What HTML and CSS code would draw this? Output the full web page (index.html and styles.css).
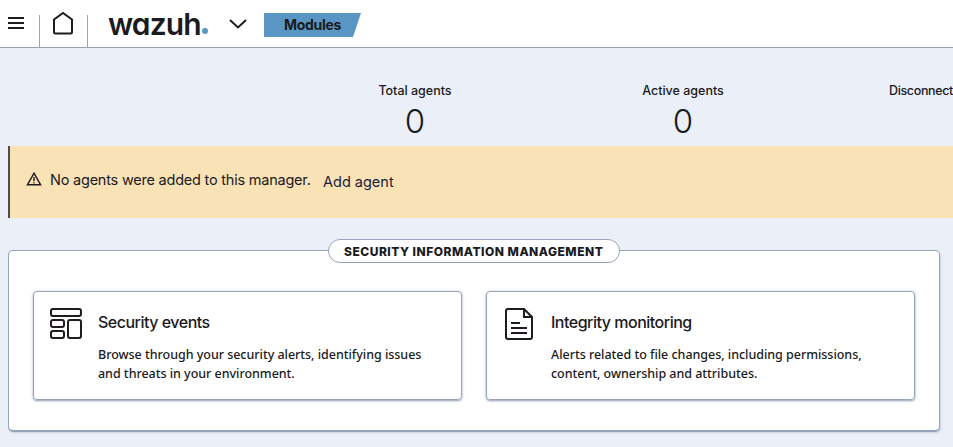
FILE: index.html
```
<!DOCTYPE html>
<html lang="en">
<head>
<meta charset="utf-8">
<title>Wazuh</title>
<link rel="stylesheet" href="styles.css">
</head>
<body>
<header class="header">
  <div class="cell menu"><svg width="16" height="13" viewBox="0 0 16 13"><path d="M0 1h16M0 6h16M0 11h16"/></svg></div>
  <div class="cell home"><svg width="22" height="24" viewBox="0 0 22 24"><path d="M2 8.500 11 2l9 6.500v12.500q0 1.500-1.500 1.500h-15Q2 22.500 2 21z"/></svg></div>
  <div class="logo"><span class="word">wazuh</span><i class="dot"></i></div>
  <svg class="chevron" width="20" height="12" viewBox="0 0 20 12"><path d="m2 2 8 7.500L18 2"/></svg>
  <div class="crumb"><span>Modules</span></div>
</header>
<main>
  <section class="stats">
    <div class="stat"><span class="label">Total agents</span><span class="num">0</span></div>
    <div class="stat"><span class="label">Active agents</span><span class="num">0</span></div>
    <div class="stat last"><span class="label">Disconnect</span></div>
  </section>
  <section class="callout">
    <svg width="16" height="14" viewBox="0 0 16 14"><path d="M8 1.200 14.600 12.800H1.400zM8 5v4.200M8 10.200v1.300"/></svg>
    <span class="msg">No agents were added to this manager.</span>
    <a class="add">Add agent</a>
  </section>
  <section class="panel">
    <h2 class="title"><span>SECURITY INFORMATION MANAGEMENT</span></h2>
    <div class="cards">
      <article class="card">
        <svg width="34" height="34" viewBox="0 0 34 34"><rect x="2" y="2" width="30" height="7" rx="2"/><rect x="2" y="13" width="13" height="7" rx="2"/><rect x="2" y="24" width="13" height="7" rx="2"/><rect x="19" y="13" width="13" height="18" rx="2"/></svg>
        <div class="body"><h3>Security events</h3><p>Browse through your security alerts, identifying issues<br>and threats in your environment.</p></div>
      </article>
      <article class="card">
        <svg width="34" height="34" viewBox="0 0 34 34"><path d="M5 2h17l8 8v20q0 2-2 2H6q-2 0-2-2V4q0-2 2-2M22 2v8h8M9 16h9M9 21h16M9 26h16"/></svg>
        <div class="body"><h3>Integrity monitoring</h3><p>Alerts related to file changes, including permissions,<br>content, ownership and attributes.</p></div>
      </article>
    </div>
  </section>
</main>
</body>
</html>
```
FILE: styles.css
```
* { box-sizing: border-box; }
body { margin: 0; height: 447px; overflow: hidden; background: #ebf0f8; color: #1a1a21; font-family: Inter, "Liberation Sans", sans-serif; }
svg { fill: none; stroke: #1f1b20; stroke-width: 2; flex: none; display: block; }
h2, h3, p { margin: 0; }
.header { height: 48px; background: #fff; border-bottom: 1px solid #98a2b8; display: flex; align-items: flex-start; }
.cell { height: 32px; margin-top: 15px; border-right: 1px solid #98a2b8; }
.menu { width: 40px; padding: 2px 0 0 8px; }
.home { width: 48px; padding-left: 12px; }
.home svg { margin-top: -4px; }
.logo { display: flex; align-items: flex-end; width: 101px; height: 34px; margin-left: 20px; }
.word { width: 94px; font-size: 30px; line-height: 30px; margin-bottom: -5px; font-weight: 600; letter-spacing: -.9px; font-feature-settings: "cv11"; white-space: nowrap; }
.dot { width: 6px; height: 6px; border-radius: 50%; background: #5a96c3; }
.chevron { margin: 18px 0 0 19px; }
.crumb { width: 97px; height: 24px; margin: 13px 0 0 16px; padding-left: 20px; background: #5a96c3; clip-path: polygon(0 0, 100% 0, calc(100% - 8px) 100%, 0 100%); font-size: 14px; line-height: 24px; font-weight: 700; letter-spacing: -.3px; }
.stats { height: 98px; display: flex; padding: 35px 0 0 281px; }
.stat { width: 268px; flex: none; display: flex; flex-direction: column; align-items: center; white-space: nowrap; }
.last { width: 64px; align-items: flex-start; margin-left: 72px; }
.label { font-size: 12.500px; line-height: 16px; font-weight: 500; }
.last .label { letter-spacing: -.35px; }
.num { font-size: 33px; line-height: 44px; font-weight: 300; }
.callout { height: 72px; margin-left: 8px; padding: 0 0 6px 16px; border-left: 2px solid #4c4b54; background: #fae2b7; display: flex; align-items: center; font-size: 14.500px; white-space: nowrap; }
.callout svg { stroke-width: 1.400; }
.msg { margin-left: 8px; width: 273px; letter-spacing: -.22px; }
.add { margin-top: 4px; color: #18223a; }
.panel { width: 932px; height: 182px; margin: 32px 0 0 8px; background: #fff; border: 1px solid #98a2b8; border-bottom-width: 2px; border-radius: 5px; box-shadow: 1px 1px 2px #98a2b866; }
.title { width: 292px; height: 24px; margin: -12px auto 0 319px; border: 1px solid #98a2b8; border-radius: 12px; background: #fff; padding-left: 15px; font-size: 12px; line-height: 23px; font-weight: 800; letter-spacing: .5px; white-space: nowrap; }
.cards { display: grid; grid-template-columns: 429px 429px; gap: 24px; margin: 28px 0 0 24px; }
.card { height: 109px; border: 1px solid #98a2b8; border-radius: 4px; padding: 15px 0 0 15px; display: flex; box-shadow: 0 1px 2px #98a2b8, 0 0 4px #dce6f3; }
.body { margin-left: 15px; white-space: nowrap; }
.body h3 { font-size: 16px; line-height: 22px; font-weight: 500; letter-spacing: -.5px; margin: 4px 0 12px; }
.body p { font-family: "Noto Sans", sans-serif; font-size: 12.500px; line-height: 19px; font-weight: 500; letter-spacing: -.03px; }
```
